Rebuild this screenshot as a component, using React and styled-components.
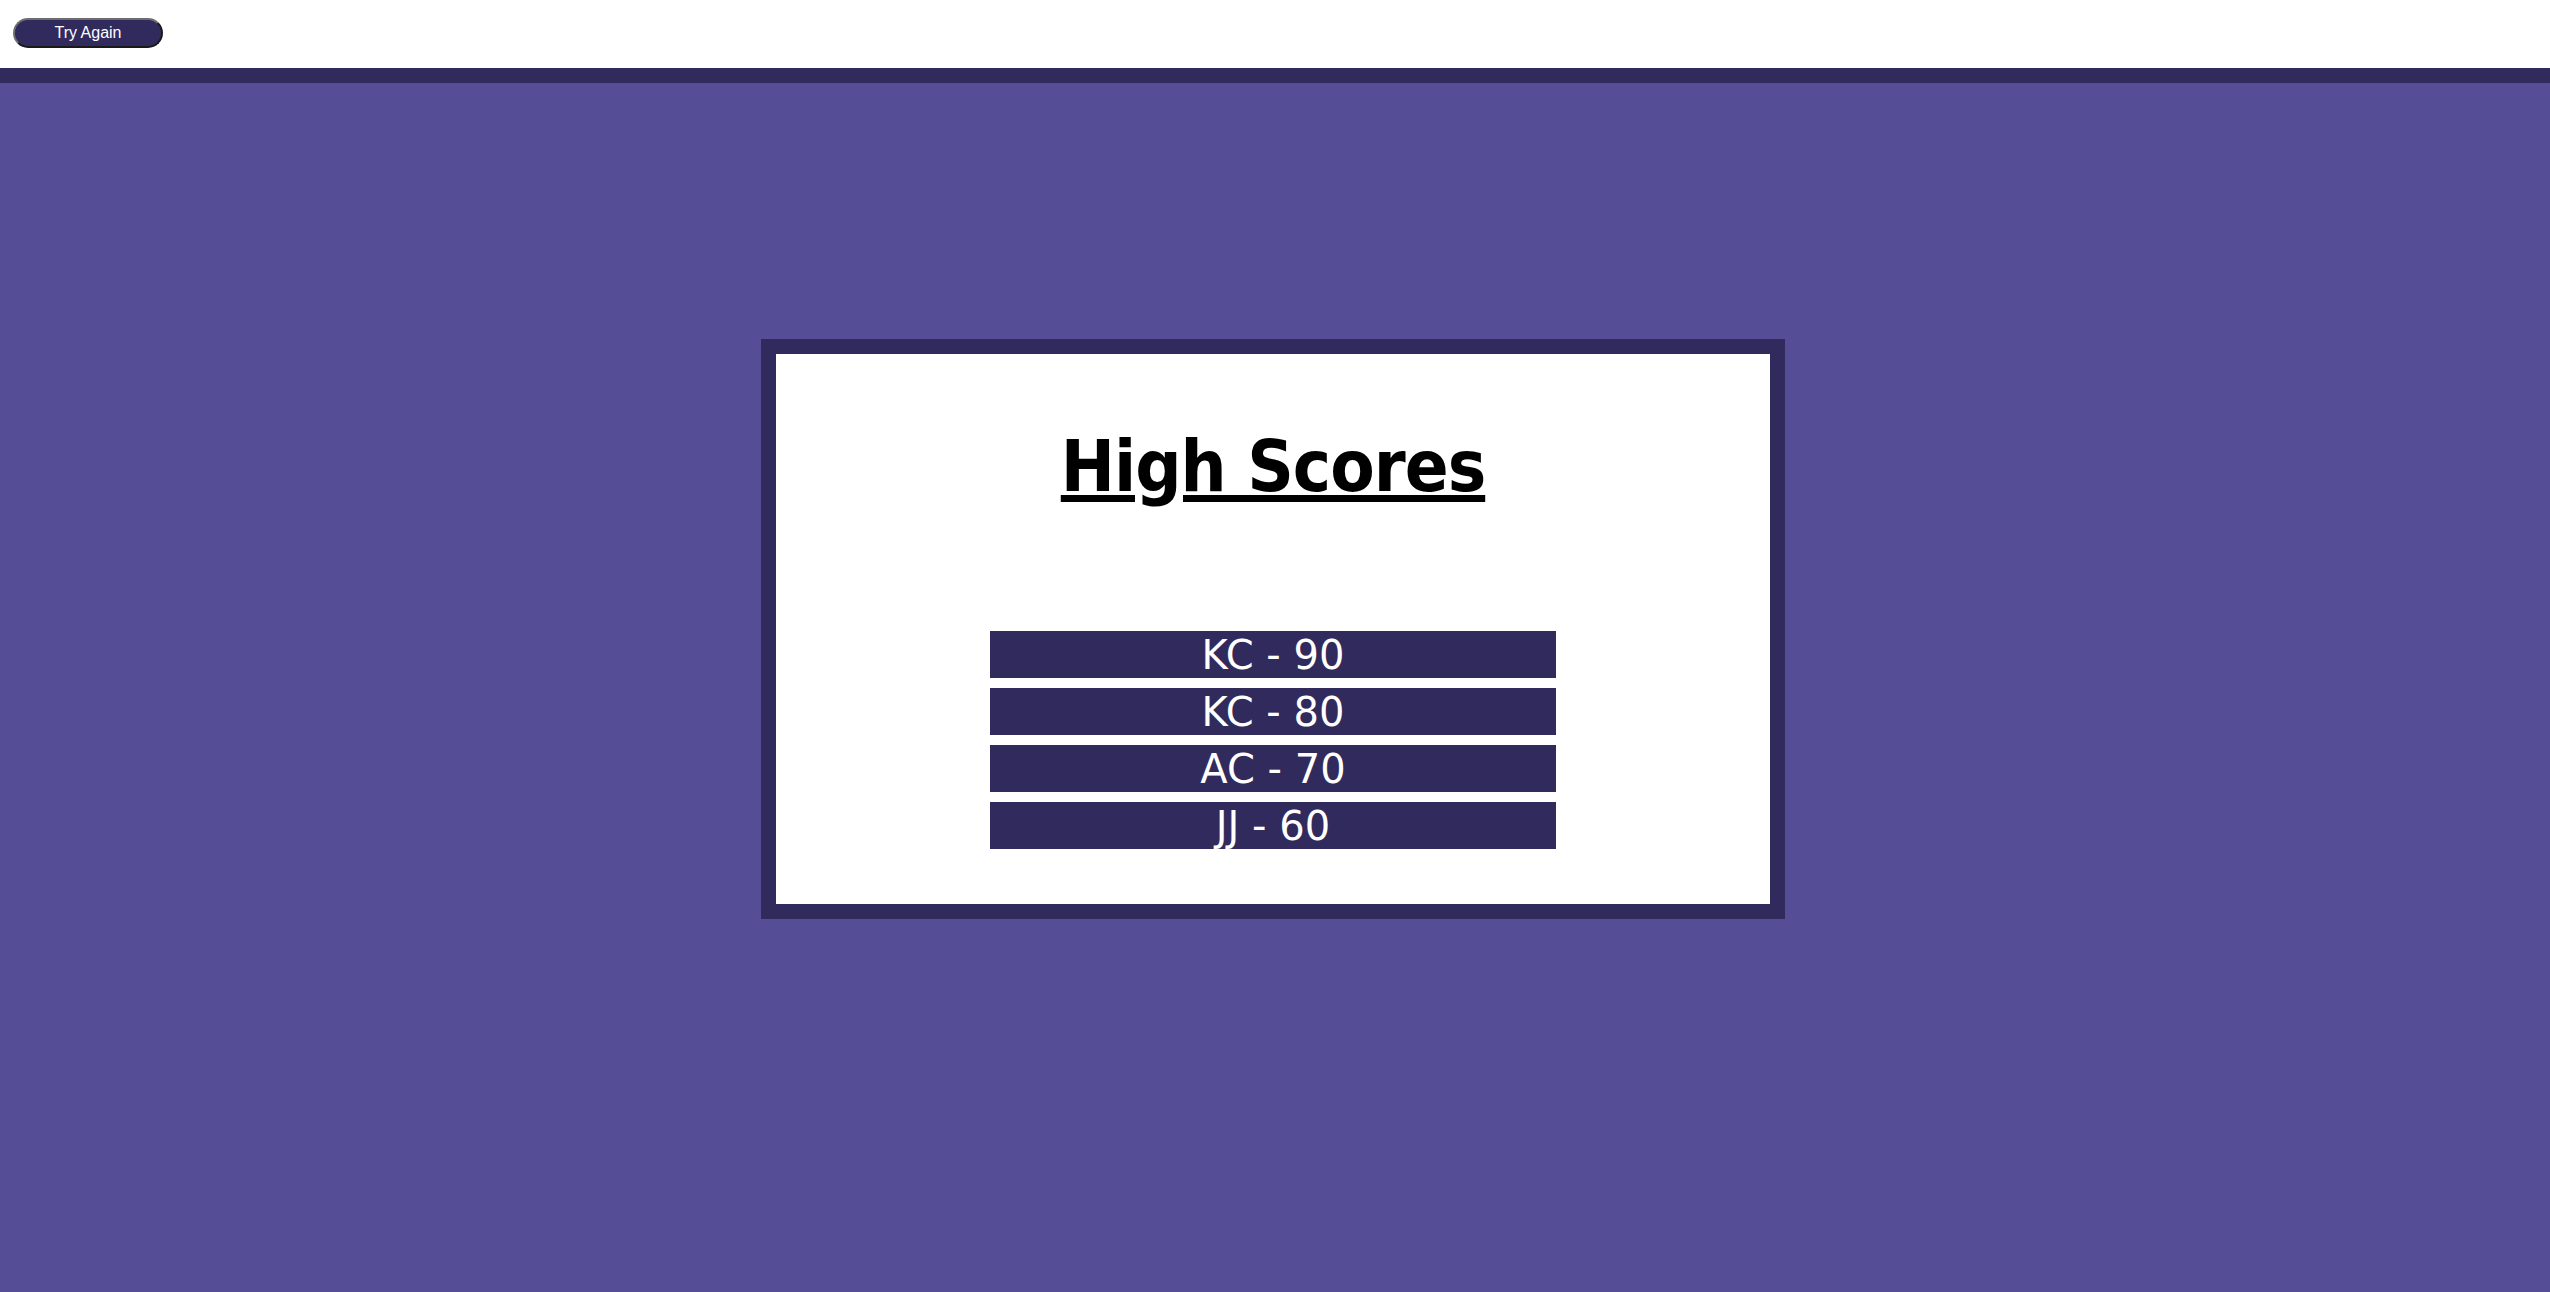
import React from 'react';
import styled, { createGlobalStyle } from 'styled-components';

const scores = [
  { initials: 'KC', score: 90 },
  { initials: 'KC', score: 80 },
  { initials: 'AC', score: 70 },
  { initials: 'JJ', score: 60 },
];

export default function App () {
  return (
    <PageWrapper>
      <GlobalStyle />
      <Header>
        <TryAgainButton type="button">Try Again</TryAgainButton>
      </Header>
      <Main>
        <ScoreCard>
          <Title>High Scores</Title>
          <ScoreList>
            {scores.map((entry, index) => (
              <ScoreRow key={index}>
                {entry.initials} - {entry.score}
              </ScoreRow>
            ))}
          </ScoreList>
        </ScoreCard>
      </Main>
    </PageWrapper>
  );
}

const GlobalStyle = createGlobalStyle`
  html, body {
    margin: 0;
    padding: 0;
    background: #ffffff;
  }
  * {
    box-sizing: border-box;
  }
`;

const PageWrapper = styled.div`
  display: flex;
  flex-flow: column nowrap;
  min-height: 100vh;
`;

const Header = styled.header`
  height: 83px;
  padding: 18px 13px 0;
  background: #ffffff;
  border-bottom: 15px solid #312a5d;
`;

const TryAgainButton = styled.button`
  display: block;
  width: 150px;
  height: 30px;
  padding: 0;
  border: 2px outset #6e6e6e;
  border-radius: 15px;
  background: #312a5d;
  color: #ffffff;
  font-family: "Liberation Sans", Arial, sans-serif;
  font-size: 16px;
  cursor: pointer;
`;

const Main = styled.main`
  flex: 1;
  display: flex;
  justify-content: center;
  align-items: flex-start;
  padding: 256px 4px 0 0;
  background: #554d95;
`;

const ScoreCard = styled.section`
  display: flex;
  flex-flow: column nowrap;
  align-items: center;
  width: 1024px;
  padding: 70px 0 55px;
  background: #ffffff;
  border: 15px solid #312a5d;
`;

const Title = styled.h1`
  margin: 0;
  font-family: "DejaVu Sans Condensed", "DejaVu Sans", sans-serif;
  font-stretch: condensed;
  font-size: 72px;
  font-weight: bold;
  line-height: 84px;
  letter-spacing: -1px;
  color: #000000;
  text-decoration: underline;
`;

const ScoreList = styled.ol`
  display: grid;
  gap: 10px;
  width: 566px;
  margin: 123px 0 0;
  padding: 0;
  list-style: none;
`;

const ScoreRow = styled.li`
  height: 47px;
  padding-top: 2px;
  background: #312a5d;
  color: #ffffff;
  font-family: "DejaVu Sans", Verdana, sans-serif;
  font-size: 40px;
  line-height: 45px;
  text-align: center;
`;
